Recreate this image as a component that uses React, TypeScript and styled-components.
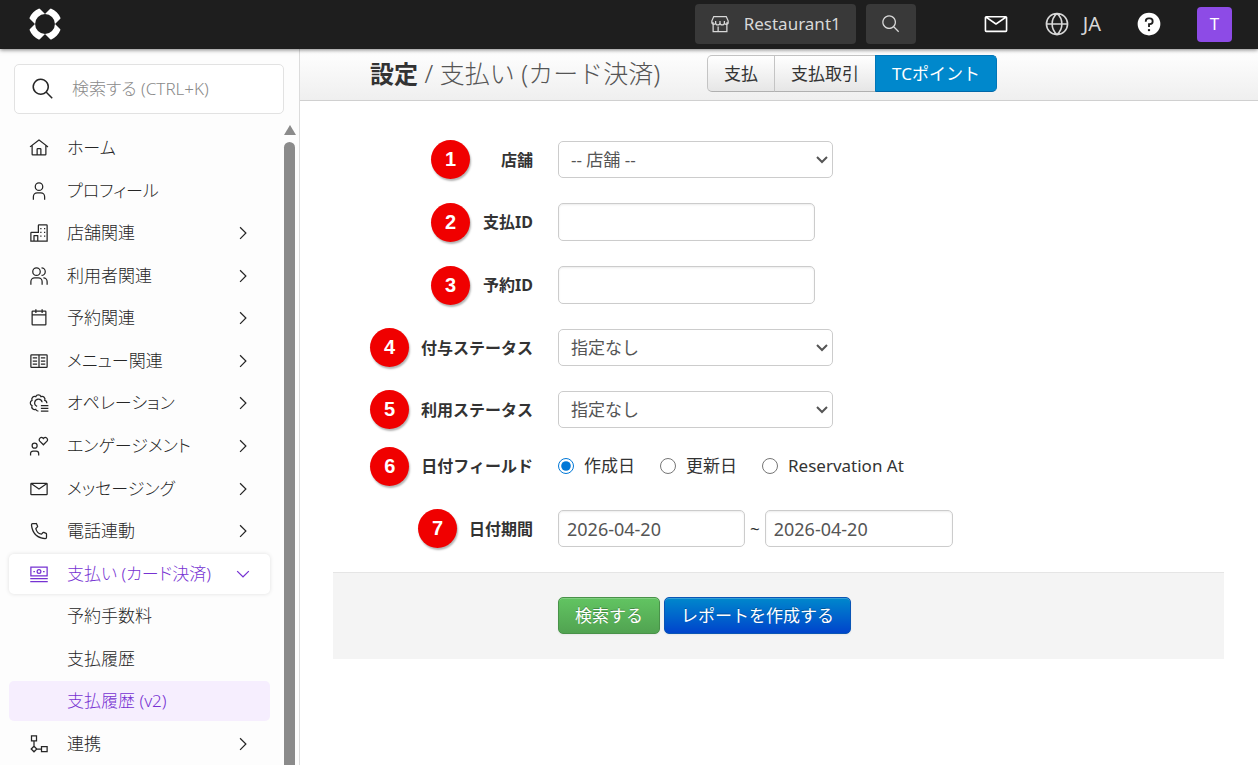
import React, { useState } from 'react';
import styled, { createGlobalStyle } from 'styled-components';

const GlobalStyle = createGlobalStyle`
  *, *::before, *::after { box-sizing: border-box; }
  body {
    margin: 0;
    background: #fff;
    color: #333;
    font: 400 17px/26px "Noto Sans", "Noto Sans CJK JP", sans-serif;
  }
  button, input, select { font: inherit; color: inherit; margin: 0; }
  a { color: inherit; text-decoration: none; }
`;

/* ---------- icons ---------- */

const Svg = styled.svg<{ $size: number }>`
  display: block;
  flex: none;
  width: ${(p) => p.$size}px;
  height: ${(p) => p.$size}px;
`;

const FILLED: Record<string, string> = {
  home: 'M16.6123,2.2138a1.01,1.01,0,0,0-1.2427,0L1,13.4194l1.2427,1.5717L4,13.6208V26a2.0041,2.0041,0,0,0,2,2H26a2.0037,2.0037,0,0,0,2-2V13.63L29.7573,15,31,13.4282ZM18,26H14V18h4Zm2,0V18a2.0023,2.0023,0,0,0-2-2H14a2.002,2.002,0,0,0-2,2v8H6V12.0615l10-7.79,10,7.8005V26Z',
  user: 'M16,4a5,5,0,1,1-5,5,5,5,0,0,1,5-5m0-2a7,7,0,1,0,7,7A7,7,0,0,0,16,2ZM26,30H24V25a5,5,0,0,0-5-5H13a5,5,0,0,0-5,5v5H6V25a7,7,0,0,1,7-7h6a7,7,0,0,1,7,7Z',
  building:
    'M28,2H16a2.002,2.002,0,0,0-2,2V14H4a2.002,2.002,0,0,0-2,2V30H30V4A2.0023,2.0023,0,0,0,28,2ZM9,28V21h4v7Zm19,0H15V20a1,1,0,0,0-1-1H8a1,1,0,0,0-1,1v8H4V16H16V4H28ZM18,8h2v2h-2ZM24,8h2v2h-2ZM18,14h2v2h-2ZM24,14h2v2h-2ZM18,20h2v2h-2ZM24,20h2v2h-2Z',
  users:
    'M30,30H28V25a5.0057,5.0057,0,0,0-5-5V18a7.0078,7.0078,0,0,1,7,7ZM22,30H20V25a5.0059,5.0059,0,0,0-5-5H9a5.0059,5.0059,0,0,0-5,5v5H2V25a7.0082,7.0082,0,0,1,7-7h6a7.0082,7.0082,0,0,1,7,7ZM20,2V4a5,5,0,0,1,0,10v2A7,7,0,0,0,20,2ZM12,4A5,5,0,1,1,7,9a5,5,0,0,1,5-5m0-2a7,7,0,1,0,7,7A7,7,0,0,0,12,2Z',
  calendar:
    'M26,4H22V2H20V4H12V2H10V4H6A2,2,0,0,0,4,6V26a2,2,0,0,0,2,2H26a2,2,0,0,0,2-2V6A2,2,0,0,0,26,4Zm0,22H6V12H26Zm0-16H6V6h4V8h2V6h8V8h2V6h4Z',
  mail: 'M28,6H4A2,2,0,0,0,2,8V24a2,2,0,0,0,2,2H28a2,2,0,0,0,2-2V8A2,2,0,0,0,28,6ZM25.8,8,16,14.78,6.2,8ZM4,24V8.91l11.43,7.91a1,1,0,0,0,1.14,0L28,8.91V24Z',
  phone:
    'M26,29h-.17C6.18,27.87,3.39,11.29,3,6.23A3,3,0,0,1,5.76,3h5.51a2,2,0,0,1,1.86,1.26L14.65,8a2,2,0,0,1-.44,2.16l-2.13,2.15a9.37,9.37,0,0,0,7.58,7.6l2.17-2.15A2,2,0,0,1,24,17.35l3.77,1.51A2,2,0,0,1,29,20.72V26A3,3,0,0,1,26,29ZM6,5A1,1,0,0,0,5,6v.08C5.46,12,8.41,26,25.94,27A1,1,0,0,0,27,26.06V20.72l-3.77-1.51-2.87,2.85L19.88,22C11.18,20.91,10,12.21,10,12.12l-.06-.48,2.84-2.87L11.28,5Z',
  search:
    'M29,27.5859l-7.5521-7.5521a11.0177,11.0177,0,1,0-1.4141,1.4141L27.5859,29ZM4,13a9,9,0,1,1,9,9A9.01,9.01,0,0,1,4,13Z',
  help: 'M16,2A14,14,0,1,0,30,16,14,14,0,0,0,16,2Zm0,23a1.5,1.5,0,1,1,1.5-1.5A1.5,1.5,0,0,1,16,25Zm1.142-7.754v2.5017h-2.25V15h2.125a2.376,2.376,0,0,0,0-4.753h-1.5a2.3786,2.3786,0,0,0-2.375,2.375v.5h-2.25v-.5A4.6325,4.6325,0,0,1,15.517,8h1.5a4.624,4.624,0,0,1,.125,9.2461Z',
  right: 'M22 16L12 26 10.6 24.6 19.2 16 10.6 7.4 12 6z',
  down: 'M16 22L6 12 7.4 10.6 16 19.2 24.6 10.6 26 12z',
};

const STROKED: Record<string, string> = {
  book: 'M4 6H28a1 1 0 0 1 1 1V25a1 1 0 0 1-1 1H4a1 1 0 0 1-1-1V7a1 1 0 0 1 1-1ZM16 6V26M6 11H13M6 16H13M6 21H13M19 11H26M19 16H26M19 21H26',
  operation:
    'M28.5 16.5A4.6 4.6 0 0 0 25.2 11.8A4.6 4.6 0 0 0 19.2 5.8A4.6 4.6 0 0 0 10.8 5.8A4.6 4.6 0 0 0 4.8 11.8A4.6 4.6 0 0 0 4.8 20.2A4.6 4.6 0 0 0 10.8 26.2A4.6 4.6 0 0 0 15 29M13 21.4A6 6 0 1 1 21 14.8M19 20H31M19 24.5H31M19 29H31',
  engagement:
    'M9 11.5a4 4 0 1 1 0 8a4 4 0 1 1 0-8ZM2.5 31V28a4 4 0 0 1 4-4h5a4 4 0 0 1 4 4v3M23 14L17.2 8.2A3.6 3.6 0 0 1 22.3 3.2L23 4L23.7 3.2A3.6 3.6 0 0 1 28.8 8.2Z',
  money:
    'M3 5H29V19H3ZM16 9a3 3 0 1 1 0 6a3 3 0 1 1 0-6ZM7 12H9.5M22.5 12H25M2 23.5H30M2 28H30',
  flow: 'M4 3H12V11H4ZM8 11V19M8 19.5L12.5 24L8 28.5L3.5 24ZM12.5 24H20M20 20H29V28H20Z',
  store:
    'M5 13V28H27V13M6 4H26L29 11V13a3 3 0 0 1-6 1.2V11V14a3.4 3.4 0 0 1-7 0V11V14a3.4 3.4 0 0 1-7 0V11V14a3 3 0 0 1-6-1V11ZM13 28V20',
  globe:
    'M16 3a13 13 0 1 1 0 26a13 13 0 1 1 0-26ZM3 16H29M16 3C8 10 8 22 16 29M16 3C24 10 24 22 16 29',
};

function Icon({ name, size = 20 }: { name: string; size?: number }) {
  return (
    <Svg viewBox="0 0 32 32" $size={size} aria-hidden="true">
      {FILLED[name] ? (
        <path d={FILLED[name]} fill="currentColor" />
      ) : (
        <path d={STROKED[name]} fill="none" stroke="currentColor" strokeWidth="2" />
      )}
    </Svg>
  );
}

function Logo() {
  return (
    <Svg viewBox="-18 -18 36 36" $size={34} aria-hidden="true">
      <clipPath id="cross">
        <path d="M-7.5 -20H7.5V20H-7.5Z" transform="rotate(45)" />
        <path d="M-7.5 -20H7.5V20H-7.5Z" transform="rotate(-45)" />
      </clipPath>
      <circle r="14" fill="none" stroke="#fff" strokeWidth="7" clipPath="url(#cross)" />
    </Svg>
  );
}

/* ---------- header ---------- */

const Page = styled.div`
  display: grid;
  grid-template: 49px minmax(0, 1fr) / 300px minmax(0, 1fr);
  height: 100vh;
`;

const Header = styled.header`
  grid-column: 1 / -1;
  z-index: 1;
  display: flex;
  align-items: center;
  padding: 0 26px 1px 28px;
  background: #1e1e1e;
  color: #d8d8d8;
  box-shadow: 0 1px 4px rgba(0, 0, 0, 0.5);
`;

const HomeLink = styled.a`
  margin-right: auto;
`;

const HeaderButton = styled.button`
  display: flex;
  align-items: center;
  gap: 14px;
  height: 40px;
  margin-right: 10px;
  padding: 0 15px;
  border: 0;
  border-radius: 4px;
  background: #393939;
  color: #d8d8d8;
`;

const HeaderTools = styled.div`
  display: flex;
  align-items: center;
  gap: 35px;
  margin-left: 57px;
`;

const ToolButton = styled.button<{ $bright?: boolean }>`
  display: flex;
  align-items: center;
  gap: 13px;
  padding: 0;
  border: 0;
  background: none;
  color: ${(p) => (p.$bright ? '#fff' : '#d8d8d8')};
  font-size: 20px;
`;

const Avatar = styled.button`
  width: 35px;
  height: 35px;
  padding: 0;
  border: 0;
  border-radius: 4px;
  background: #8d4be6;
  color: #fff;
`;

/* ---------- sidebar ---------- */

const Sidebar = styled.aside`
  display: flex;
  flex-direction: column;
  min-height: 0;
  padding-top: 15px;
  border-right: 1px solid #dcdcdc;
  background: #fdfdfd;
  color: #262626;
  font-weight: 300;
`;

const SearchBox = styled.label`
  display: flex;
  align-items: center;
  gap: 17px;
  height: 50px;
  margin: 0 15px 10px 14px;
  padding: 0 16px;
  border: 1px solid #e2e2e2;
  border-radius: 5px;
  background: #fff;
`;

const SearchInput = styled.input`
  min-width: 0;
  flex: 1;
  padding: 0;
  border: 0;
  outline: 0;
  background: none;
  font-feature-settings: "palt";
  &::placeholder { color: #8a8a8a; opacity: 1; }
`;

const MenuArea = styled.div`
  display: flex;
  flex: 1;
  min-height: 0;
`;

const Menu = styled.ul`
  display: grid;
  grid-auto-rows: minmax(40px, 1fr);
  align-items: center;
  flex: 1;
  margin: 3px 0 0;
  padding: 0 13px 0 9px;
  list-style: none;
`;

const MenuLink = styled.a<{ $state?: 'open' | 'current' }>`
  display: flex;
  align-items: center;
  gap: 18px;
  height: 40px;
  padding: 0 17px 0 20px;
  border-radius: 5px;
  font-feature-settings: "palt";
  color: ${(p) => (p.$state ? '#7632d2' : 'inherit')};
  background: ${(p) => (p.$state === 'current' ? '#f6eefe' : p.$state === 'open' ? '#fff' : 'none')};
  box-shadow: ${(p) => (p.$state === 'open' ? '0 0 4px rgba(0, 0, 0, 0.12)' : 'none')};
`;

const MenuText = styled.span<{ $sub?: boolean }>`
  flex: 1;
  padding-left: ${(p) => (p.$sub ? 38 : 0)}px;
  white-space: nowrap;
`;

const ScrollTrack = styled.div`
  display: flex;
  flex-direction: column;
  align-items: center;
  gap: 7px;
  width: 13px;
  margin: 1px 3px 0 0;
`;

const ScrollArrow = styled.div`
  border: solid transparent;
  border-width: 0 6px 10px;
  border-bottom-color: #8b8b8b;
`;

const ScrollThumb = styled.div`
  flex: 1;
  width: 11px;
  border-radius: 6px 6px 0 0;
  background: #8b8b8b;
`;

type Item = { text: string; icon?: string; arrow?: string; state?: 'open' | 'current' };

const MENU: Item[] = [
  { text: 'ホーム', icon: 'home' },
  { text: 'プロフィール', icon: 'user' },
  { text: '店舗関連', icon: 'building', arrow: 'right' },
  { text: '利用者関連', icon: 'users', arrow: 'right' },
  { text: '予約関連', icon: 'calendar', arrow: 'right' },
  { text: 'メニュー関連', icon: 'book', arrow: 'right' },
  { text: 'オペレーション', icon: 'operation', arrow: 'right' },
  { text: 'エンゲージメント', icon: 'engagement', arrow: 'right' },
  { text: 'メッセージング', icon: 'mail', arrow: 'right' },
  { text: '電話連動', icon: 'phone', arrow: 'right' },
  { text: '支払い (カード決済)', icon: 'money', arrow: 'down', state: 'open' },
  { text: '予約手数料' },
  { text: '支払履歴' },
  { text: '支払履歴 (v2)', state: 'current' },
  { text: '連携', icon: 'flow', arrow: 'right' },
];

/* ---------- content ---------- */

const Main = styled.main`
  min-width: 0;
  overflow: auto;
`;

const TitleBar = styled.div`
  display: flex;
  align-items: center;
  gap: 47px;
  height: 52px;
  padding: 0 33px 3px 70px;
  border-bottom: 1px solid #d0d0d0;
  background: linear-gradient(#fff, #efefef);
`;

const Title = styled.h1`
  margin: 0;
  font: 300 25px/36px "Noto Sans", "Noto Sans CJK JP", sans-serif;
  color: #555;
  white-space: nowrap;
  strong { color: #333; font-size: 24px; font-weight: 700; }
`;

const Tabs = styled.nav`
  display: flex;
  height: 37px;
`;

const Tab = styled.a<{ $active?: boolean }>`
  padding: 5px 16px;
  border: 1px solid ${(p) => (p.$active ? '#0076b8' : '#c4c4c4')};
  border-bottom-color: ${(p) => (p.$active ? '#0067a8' : '#b0b0b0')};
  background: ${(p) => (p.$active ? '#0088cc' : 'linear-gradient(#fff, #e6e6e6)')};
  color: ${(p) => (p.$active ? '#fff' : '#333')};
  white-space: nowrap;
  & + & { margin-left: -1px; }
  &:first-child { border-radius: 5px 0 0 5px; }
  &:last-child { border-radius: 0 5px 5px 0; }
`;

const Form = styled.form`
  display: flex;
  flex-direction: column;
  gap: 25px;
  padding: 40px 34px 40px 33px;
`;

const Row = styled.div`
  display: grid;
  grid-template-columns: 200px minmax(0, 1fr);
  column-gap: 25px;
  align-items: center;
`;

const LabelCell = styled.div`
  display: flex;
  align-items: center;
  justify-content: flex-end;
  gap: 12px;
  margin: -2px 0;
  font-size: 16px;
  font-weight: 700;
`;

const FieldLabel = styled.label`
  min-width: 51px;
  text-align: right;
  white-space: nowrap;
`;

const Badge = styled.span`
  width: 39px;
  height: 39px;
  border-radius: 50%;
  background: #f00000;
  box-shadow: 1px 2px 2px rgba(0, 0, 0, 0.3);
  color: #fff;
  font: 700 20px/38px "Liberation Sans", sans-serif;
  text-align: center;
`;

const SelectBox = styled.div`
  position: relative;
  width: 275px;
  color: #555;
  svg {
    position: absolute;
    top: 12px;
    right: 4px;
    pointer-events: none;
  }
`;

const Select = styled.select`
  appearance: none;
  display: block;
  width: 100%;
  height: 37px;
  padding: 0 30px 0 12px;
  border: 1px solid #ccc;
  border-radius: 5px;
  background: #fff;
`;

const TextInput = styled.input<{ $width: number }>`
  width: ${(p) => p.$width}px;
  height: 38px;
  padding: 0 8px;
  border: 1px solid #ccc;
  border-radius: 5px;
  background: #fff;
  box-shadow: inset 0 1px 2px rgba(0, 0, 0, 0.08);
  color: #555;
  font-size: 18px;
`;

const RadioRow = styled.div`
  display: flex;
  gap: 25px;
  height: 32px;
`;

const RadioLabel = styled.label`
  display: flex;
  gap: 10px;
  white-space: nowrap;
`;

const Radio = styled.input`
  width: 16px;
  height: 16px;
  margin-top: 5px;
  accent-color: #0078d7;
`;

const RadioCaption = styled(LabelCell)`
  align-self: start;
  height: 26px;
  margin: 0;
`;

const Dates = styled.div`
  display: flex;
  align-items: center;
  gap: 5px;
  height: 37px;
  input { height: 37px; }
`;

const Actions = styled.div`
  display: flex;
  gap: 4px;
  padding: 24px 0 25px 225px;
  border-top: 1px solid #e5e5e5;
  background: #f4f4f4;
`;

const ActionButton = styled.button<{ $kind: 'green' | 'blue' }>`
  height: 37px;
  padding: 0 16px;
  border: 1px solid ${(p) => (p.$kind === 'green' ? '#499249' : '#0a55b5')};
  border-radius: 5px;
  background: ${(p) =>
    p.$kind === 'green' ? 'linear-gradient(#62c462, #51a351)' : 'linear-gradient(#0088cc, #0044cc)'};
  box-shadow: inset 0 1px 0 rgba(255, 255, 255, 0.2), 0 1px 2px rgba(0, 0, 0, 0.05);
  color: #fff;
  text-shadow: 0 -1px 0 rgba(0, 0, 0, 0.25);
  white-space: nowrap;
`;

function Caption({ n, text, id }: { n: number; text: string; id: string }) {
  return (
    <LabelCell>
      <Badge>{n}</Badge>
      <FieldLabel htmlFor={id}>{text}</FieldLabel>
    </LabelCell>
  );
}

function Dropdown({ id, text }: { id: string; text: string }) {
  return (
    <SelectBox>
      <Select id={id}><option>{text}</option></Select>
      <Svg viewBox="0 0 14 14" $size={14} aria-hidden="true">
        <path d="M2 4L7 9L12 4" fill="none" stroke="currentColor" strokeWidth="2" />
      </Svg>
    </SelectBox>
  );
}

export default function App() {
  const [field, setField] = useState('作成日');
  return (
    <>
      <GlobalStyle />
      <Page>
        <Header>
          <HomeLink href="#" aria-label="トップ"><Logo /></HomeLink>
          <HeaderButton type="button"><Icon name="store" />Restaurant1</HeaderButton>
          <HeaderButton type="button" aria-label="検索"><Icon name="search" /></HeaderButton>
          <HeaderTools>
            <ToolButton type="button" $bright aria-label="メール"><Icon name="mail" size={26} /></ToolButton>
            <ToolButton type="button"><Icon name="globe" size={26} />JA</ToolButton>
            <ToolButton type="button" $bright aria-label="ヘルプ"><Icon name="help" size={26} /></ToolButton>
            <Avatar type="button">T</Avatar>
          </HeaderTools>
        </Header>

        <Sidebar>
          <SearchBox>
            <Icon name="search" size={24} />
            <SearchInput type="search" placeholder="検索する (CTRL+K)" aria-label="検索する" />
          </SearchBox>
          <MenuArea>
            <Menu>
              {MENU.map((m) => (
                <li key={m.text}>
                  <MenuLink href="#" $state={m.state}>
                    {m.icon && <Icon name={m.icon} />}
                    <MenuText $sub={!m.icon}>{m.text}</MenuText>
                    {m.arrow && <Icon name={m.arrow} />}
                  </MenuLink>
                </li>
              ))}
            </Menu>
            <ScrollTrack>
              <ScrollArrow />
              <ScrollThumb />
            </ScrollTrack>
          </MenuArea>
        </Sidebar>

        <Main>
          <TitleBar>
            <Title><strong>設定</strong> / 支払い (カード決済)</Title>
            <Tabs>
              <Tab href="#">支払</Tab>
              <Tab href="#">支払取引</Tab>
              <Tab href="#" $active>TCポイント</Tab>
            </Tabs>
          </TitleBar>
          <Form onSubmit={(e) => e.preventDefault()}>
            <Row>
              <Caption n={1} text="店舗" id="shop" />
              <Dropdown id="shop" text="-- 店舗 --" />
            </Row>
            <Row>
              <Caption n={2} text="支払ID" id="payment" />
              <TextInput id="payment" type="text" $width={257} />
            </Row>
            <Row>
              <Caption n={3} text="予約ID" id="booking" />
              <TextInput id="booking" type="text" $width={257} />
            </Row>
            <Row>
              <Caption n={4} text="付与ステータス" id="grant" />
              <Dropdown id="grant" text="指定なし" />
            </Row>
            <Row>
              <Caption n={5} text="利用ステータス" id="usage" />
              <Dropdown id="usage" text="指定なし" />
            </Row>
            <Row role="radiogroup" aria-labelledby="field-caption">
              <RadioCaption>
                <Badge>6</Badge>
                <span id="field-caption">日付フィールド</span>
              </RadioCaption>
              <RadioRow>
                {['作成日', '更新日', 'Reservation At'].map((v) => (
                  <RadioLabel key={v}>
                    <Radio type="radio" name="field" checked={field === v} onChange={() => setField(v)} />
                    {v}
                  </RadioLabel>
                ))}
              </RadioRow>
            </Row>
            <Row>
              <Caption n={7} text="日付期間" id="from" />
              <Dates>
                <TextInput id="from" type="text" defaultValue="2026-04-20" $width={187} />
                <span>~</span>
                <TextInput type="text" aria-label="終了日" defaultValue="2026-04-20" $width={188} />
              </Dates>
            </Row>
            <Actions>
              <ActionButton type="submit" $kind="green">検索する</ActionButton>
              <ActionButton type="button" $kind="blue">レポートを作成する</ActionButton>
            </Actions>
          </Form>
        </Main>
      </Page>
    </>
  );
}
